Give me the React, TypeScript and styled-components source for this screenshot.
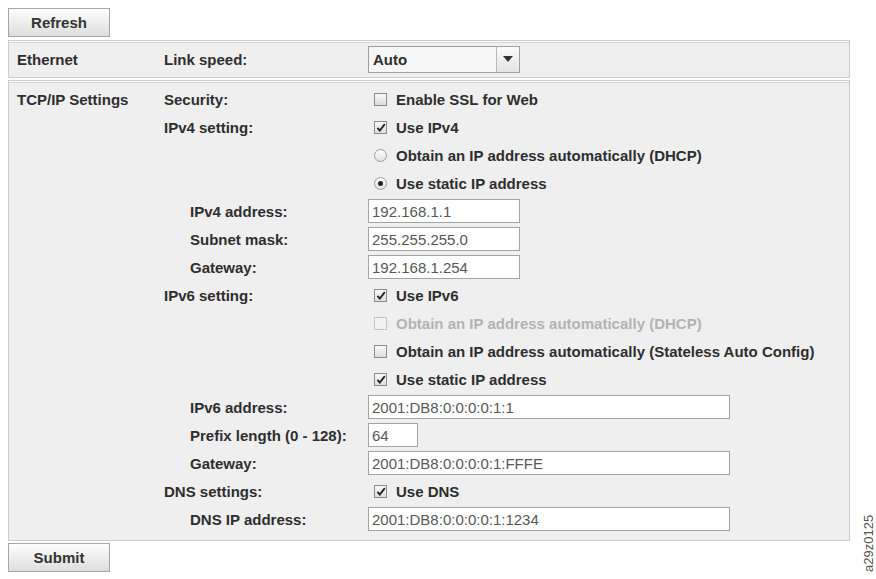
import React from 'react'
import styled, { createGlobalStyle } from 'styled-components'

const GlobalStyle = createGlobalStyle`
  body {
    margin: 0;
    background: #fff;
    font-family: 'Liberation Sans', Arial, sans-serif;
    color: #2e2e2e;
  }
`

const Page = styled.div`
  display: flex;
  padding: 8px 0 0 8px;
`

const Main = styled.div`
  width: 842px;
  display: flex;
  flex-direction: column;
`

const SideNote = styled.div`
  flex: 1;
  display: flex;
  align-items: flex-end;
  justify-content: flex-start;
  padding-bottom: 10px;
  font-size: 13px;
  color: #555;
  writing-mode: vertical-rl;
  transform: rotate(180deg);
`

const ActionButton = styled.button`
  width: 102px;
  height: 29px;
  font-family: inherit;
  font-size: 15px;
  font-weight: bold;
  color: #333;
  border: 1px solid #a6a6a6;
  background: linear-gradient(#fdfdfd, #dedede);
  padding: 0;
`

const Panel = styled.div<{ $first?: boolean }>`
  margin-top: ${(p) => (p.$first ? 3 : 2)}px;
  background: #efefef;
  border: 1px solid #cdcdcd;
  box-shadow: inset 0 1px 0 #fafafa, inset 0 2px 0 #d8d8d8;
  padding: ${(p) => (p.$first ? '4px 8px 4px 8px' : '4px 8px 7px 8px')};
`

const Row = styled.div`
  display: flex;
  align-items: center;
  height: 28px;
`

const SectionCell = styled.div`
  width: 147px;
  font-size: 15px;
  font-weight: bold;
`

const LabelCell = styled.div<{ $indent?: boolean }>`
  width: ${(p) => (p.$indent ? 178 : 204)}px;
  padding-left: ${(p) => (p.$indent ? 26 : 0)}px;
  font-size: 15px;
  font-weight: bold;
  white-space: nowrap;
`

const ControlCell = styled.div`
  display: flex;
  align-items: center;
`

const Option = styled.label<{ $disabled?: boolean }>`
  display: flex;
  align-items: center;
  gap: 9px;
  padding-left: 6px;
  font-size: 15px;
  font-weight: bold;
  white-space: nowrap;
  color: ${(p) => (p.$disabled ? '#b3b3b3' : '#2e2e2e')};
`

const Box = styled.span<{ $disabled?: boolean }>`
  width: 13px;
  height: 13px;
  box-sizing: border-box;
  border: 1px solid ${(p) => (p.$disabled ? '#c4c4c4' : '#8c8c8c')};
  background: ${(p) => (p.$disabled ? '#f2f2f2' : 'linear-gradient(#fafafa, #dcdcdc)')};
  display: flex;
  align-items: center;
  justify-content: center;
`

const Radio = styled.span<{ $on?: boolean }>`
  width: 13px;
  height: 13px;
  box-sizing: border-box;
  border-radius: 50%;
  border: 1px solid #9c9c9c;
  background: linear-gradient(#fdfdfd, #e2e2e2);
  display: flex;
  align-items: center;
  justify-content: center;

  &::after {
    content: '';
    width: 5px;
    height: 5px;
    border-radius: 50%;
    background: ${(p) => (p.$on ? '#222' : 'transparent')};
  }
`

const Field = styled.div<{ $w: number }>`
  width: ${(p) => p.$w}px;
  height: 24px;
  box-sizing: border-box;
  border: 1px solid #a3a3a3;
  background: #fff;
  padding-left: 3px;
  display: flex;
  align-items: center;
  font-size: 15px;
  color: #575757;
`

const Select = styled.div`
  width: 152px;
  height: 27px;
  box-sizing: border-box;
  border: 1px solid #9f9f9f;
  background: #f6f6f6;
  display: flex;
`

const SelectValue = styled.div`
  flex: 1;
  display: flex;
  align-items: center;
  padding-left: 4px;
  font-size: 15px;
  font-weight: bold;
  border-right: 1px solid #b8b8b8;
`

const SelectArrow = styled.div`
  width: 22px;
  display: flex;
  align-items: center;
  justify-content: center;
  background: linear-gradient(#fbfbfb, #e4e4e4);
`

const Footer = styled.div`
  margin-top: 2px;
`

const Check = () => (
  <svg width="10" height="9" viewBox="0 0 10 9">
    <path d="M1.5 4.8 L3.8 7.5 L8.8 1.2" fill="none" stroke="#222" strokeWidth="1.9" />
  </svg>
)

const Checkbox = ({ label, checked, disabled }: { label: string; checked?: boolean; disabled?: boolean }) => (
  <Option $disabled={disabled}>
    <Box $disabled={disabled}>{checked && <Check />}</Box>
    {label}
  </Option>
)

const RadioOption = ({ label, on }: { label: string; on?: boolean }) => (
  <Option>
    <Radio $on={on} />
    {label}
  </Option>
)

interface LineProps {
  section?: string
  label?: string
  indent?: boolean
  children?: React.ReactNode
}

const Line = ({ section, label, indent, children }: LineProps) => (
  <Row>
    <SectionCell>{section}</SectionCell>
    <LabelCell $indent={indent}>{label}</LabelCell>
    <ControlCell>{children}</ControlCell>
  </Row>
)

export default function App() {
  return (
    <>
      <GlobalStyle />
      <Page>
        <Main>
          <div>
            <ActionButton>Refresh</ActionButton>
          </div>
          <Panel $first>
            <Line section="Ethernet" label="Link speed:">
              <Select>
                <SelectValue>Auto</SelectValue>
                <SelectArrow>
                  <svg width="10" height="6" viewBox="0 0 10 6">
                    <path d="M0 0 H10 L5 6 Z" fill="#333" />
                  </svg>
                </SelectArrow>
              </Select>
            </Line>
          </Panel>
          <Panel>
            <Line section="TCP/IP Settings" label="Security:">
              <Checkbox label="Enable SSL for Web" />
            </Line>
            <Line label="IPv4 setting:">
              <Checkbox label="Use IPv4" checked />
            </Line>
            <Line>
              <RadioOption label="Obtain an IP address automatically (DHCP)" />
            </Line>
            <Line>
              <RadioOption label="Use static IP address" on />
            </Line>
            <Line label="IPv4 address:" indent>
              <Field $w={152}>192.168.1.1</Field>
            </Line>
            <Line label="Subnet mask:" indent>
              <Field $w={152}>255.255.255.0</Field>
            </Line>
            <Line label="Gateway:" indent>
              <Field $w={152}>192.168.1.254</Field>
            </Line>
            <Line label="IPv6 setting:">
              <Checkbox label="Use IPv6" checked />
            </Line>
            <Line>
              <Checkbox label="Obtain an IP address automatically (DHCP)" disabled />
            </Line>
            <Line>
              <Checkbox label="Obtain an IP address automatically (Stateless Auto Config)" />
            </Line>
            <Line>
              <Checkbox label="Use static IP address" checked />
            </Line>
            <Line label="IPv6 address:" indent>
              <Field $w={362}>2001:DB8:0:0:0:0:1:1</Field>
            </Line>
            <Line label="Prefix length (0 - 128):" indent>
              <Field $w={50}>64</Field>
            </Line>
            <Line label="Gateway:" indent>
              <Field $w={362}>2001:DB8:0:0:0:0:1:FFFE</Field>
            </Line>
            <Line label="DNS settings:">
              <Checkbox label="Use DNS" checked />
            </Line>
            <Line label="DNS IP address:" indent>
              <Field $w={362}>2001:DB8:0:0:0:0:1:1234</Field>
            </Line>
          </Panel>
          <Footer>
            <ActionButton>Submit</ActionButton>
          </Footer>
        </Main>
        <SideNote>a29z0125</SideNote>
      </Page>
    </>
  )
}
